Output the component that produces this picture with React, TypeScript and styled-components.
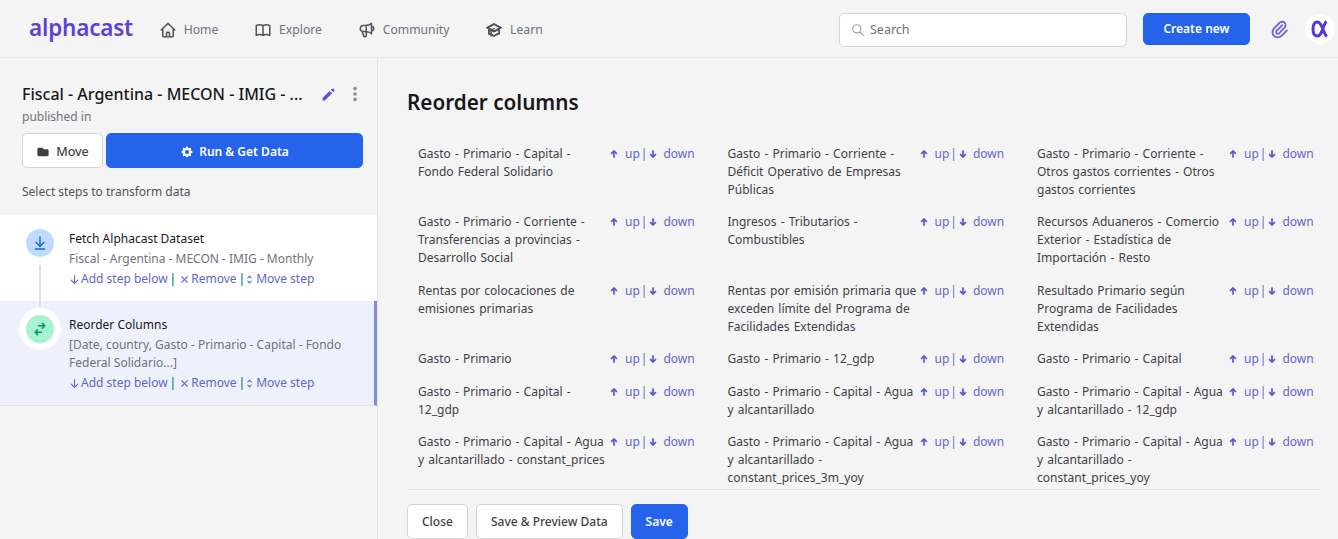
import { ReactNode } from "react";
import styled, { createGlobalStyle } from "styled-components";
import { ArrowDownToLine } from "lucide-react";
import {
  HiArrowDown,
  HiArrowSmDown,
  HiArrowSmUp,
  HiCog,
  HiDotsVertical,
  HiFolder,
  HiOutlineAcademicCap,
  HiOutlineBookOpen,
  HiOutlineHome,
  HiOutlinePaperClip,
  HiOutlineSearch,
  HiOutlineSpeakerphone,
  HiPencil,
  HiSelector,
  HiSwitchHorizontal,
  HiX
} from "react-icons/hi";

const GlobalStyle = createGlobalStyle`
  html, body { margin: 0; padding: 0; height: 100%; overflow: hidden; }
  body {
    background: #f4f4f5;
    font-family: "Noto Sans", "Open Sans", sans-serif;
    color: #3f3f46;
  }
`;

const Page = styled.div`
  display: flex;
  flex-direction: column;
  height: 539px;
  overflow: hidden;
`;

const Header = styled.header`
  display: flex;
  align-items: center;
  height: 58px;
  flex: none;
  box-sizing: border-box;
  border-bottom: 1px solid #e9e9eb;
  padding: 2px 3px 0 29px;
`;

const Logo = styled.div`
  width: 130px;
  font-size: 22.5px;
  font-weight: 600;
  letter-spacing: -0.2px;
  color: #5b44d4;
  margin-top: -5px;
`;

const Nav = styled.nav`
  display: flex;
  align-items: center;
  gap: 36px;
  flex: 1;
`;

const NavItem = styled.a`
  display: flex;
  align-items: center;
  gap: 7px;
  font-size: 12.2px;
  color: #6b7280;
  margin-left: -0.3px;
  svg { width: 18px; height: 18px; color: #52525b; }
`;

const SearchBox = styled.div`
  display: flex;
  align-items: center;
  gap: 5px;
  width: 288px;
  height: 34px;
  box-sizing: border-box;
  padding: 0 11px;
  background: #fff;
  border: 1px solid #d4d4d8;
  border-radius: 5px;
  font-size: 12.5px;
  color: #71717a;
  svg { width: 14px; height: 14px; color: #9ca3af; }
`;

const Button = styled.button<{ $primary?: boolean }>`
  display: inline-flex;
  align-items: center;
  justify-content: center;
  gap: 6px;
  height: 35px;
  box-sizing: border-box;
  border-radius: 5px;
  font-family: inherit;
  font-size: 12px;
  font-weight: ${(p) => (p.$primary ? 600 : 500)};
  color: ${(p) => (p.$primary ? "#fff" : "#3f3f46")};
  background: ${(p) => (p.$primary ? "#2563eb" : "#fff")};
  border: 1px solid ${(p) => (p.$primary ? "#2563eb" : "#d4d4d8")};
  padding: 0 14px;
  svg { width: 14px; height: 14px; }
`;

const CreateButton = styled(Button)`
  width: 107px;
  height: 32px;
  margin-left: 16px;
  margin-top: -2px;
`;

const Clip = styled(HiOutlinePaperClip)`
  width: 21px;
  height: 21px;
  color: #6d5fd8;
  margin-left: 19px;
`;

const Avatar = styled.div`
  display: flex;
  align-items: center;
  justify-content: center;
  width: 30px;
  height: 30px;
  margin-left: 15px;
  margin-top: -2px;
  border-radius: 50%;
  background: #fff;
  color: #5b35d5;
  svg { width: 18px; height: 18px; }
`;

const Body = styled.div`
  display: flex;
  flex: 1;
  min-height: 0;
`;

const Sidebar = styled.aside`
  width: 378px;
  flex: none;
  box-sizing: border-box;
  border-right: 1px solid #e4e4e7;
`;

const SideHead = styled.div`
  padding: 25px 14px 0 22px;
`;

const TitleRow = styled.div`
  display: flex;
  align-items: center;
  height: 22px;
`;

const DatasetTitle = styled.h2`
  flex: 1;
  margin: 0;
  font-size: 16px;
  font-weight: 500;
  color: #18181b;
  white-space: nowrap;
`;

const EditIcon = styled(HiPencil)`
  width: 17px;
  height: 17px;
  color: #5b50d6;
  margin-right: 9px;
`;

const MoreIcon = styled(HiDotsVertical)`
  width: 18px;
  height: 18px;
  color: #8b8b93;
  margin-right: -1px;
`;

const Published = styled.div`
  font-size: 12px;
  line-height: 18px;
  margin-top: 3px;
  color: #71717a;
`;

const ButtonRow = styled.div`
  display: flex;
  gap: 3px;
  margin-top: 7px;
`;

const MoveButton = styled(Button)`
  width: 81px;
  flex: none;
  padding: 2px 0 0;
  font-size: 12.5px;
`;

const RunButton = styled(Button)`
  flex: 1;
  gap: 5px;
  padding-top: 2px;
`;

const Hint = styled.p`
  margin: 15px 0 14px;
  font-size: 12px;
  line-height: 18px;
  letter-spacing: -0.02px;
  color: #52525b;
`;

const Step = styled.div<{ $active?: boolean }>`
  position: relative;
  display: flex;
  flex-direction: column;
  gap: 2px;
  padding: 15px 0 13px 69px;
  background: ${(p) => (p.$active ? "#eef1fb" : "#fff")};
  border-right: ${(p) => (p.$active ? "3px solid #818cdf" : "none")};
  border-bottom: ${(p) => (p.$active ? "1px solid #e4e4e7" : "none")};
  margin-bottom: ${(p) => (p.$active ? "-1px" : "0")};
`;

const Connector = styled.div`
  position: absolute;
  left: 39px;
  top: 50px;
  width: 2px;
  height: 42px;
  background: #e0e0e4;
  z-index: 1;
`;

const StepIcon = styled.div<{ $bg: string; $fg: string; $ring?: boolean }>`
  position: absolute;
  left: 26px;
  top: 14px;
  width: 28px;
  height: 28px;
  border-radius: 50%;
  display: flex;
  align-items: center;
  justify-content: center;
  background: ${(p) => p.$bg};
  color: ${(p) => p.$fg};
  box-shadow: ${(p) => (p.$ring ? "0 0 0 7px #fff" : "none")};
  z-index: 2;
  svg { width: 16px; height: 16px; }
`;

const StepTitle = styled.div`
  font-size: 12px;
  line-height: 18px;
  color: #18181b;
`;

const StepDesc = styled.div`
  font-size: 12px;
  line-height: 18px;
  color: #71717a;
  width: 285px;
`;

const StepLinks = styled.div`
  display: flex;
  align-items: center;
  font-size: 12px;
  line-height: 18px;
  color: #6366c8;
  svg { width: 11px; height: 11px; flex: none; }
`;

const LinkText = styled.span`
  margin-left: 1px;
`;

const Pipe = styled.span`
  color: #0f8f7a;
  font-weight: 600;
  margin: 0 3px 0 2px;
`;

const MoveIcon = styled(HiSelector)`
  margin-left: -4px;
`;

const Main = styled.main`
  flex: 1;
  min-width: 0;
  display: flex;
  flex-direction: column;
  padding-left: 29px;
`;

const MainTitle = styled.h1`
  margin: 30px 0 0;
  height: 28px;
  font-size: 20.7px;
  line-height: 28px;
  font-weight: 600;
  color: #18181b;
`;

const ColumnGrid = styled.div`
  flex: 1;
  min-height: 0;
  overflow: hidden;
  display: grid;
  grid-template-columns: repeat(3, 309.5px);
  grid-auto-rows: min-content;
  row-gap: 14.5px;
  padding-top: 28.5px;
`;

const Cell = styled.div`
  display: grid;
  grid-template-columns: 191px auto;
  padding-left: 11px;
  font-size: 12px;
  line-height: 18px;
  word-spacing: 1px;
  color: #3f3f46;
`;

const Arrows = styled.div`
  display: flex;
  align-items: center;
  height: 18px;
  margin-left: -1px;
  color: #6366c8;
  word-spacing: 0;
  svg {
    width: 12px;
    height: 12px;
    color: #5b50c8;
    flex: none;
    stroke: currentColor;
    stroke-width: 1px;
  }
`;

const ArrowLabel = styled.span<{ $gap: number }>`
  margin-left: ${(p) => p.$gap}px;
`;

const ArrowPipe = styled.span`
  margin-left: 1px;
`;

const Footer = styled.div`
  display: flex;
  gap: 8px;
  flex: none;
  margin-right: 18px;
  padding-top: 14px;
  height: 50px;
  box-sizing: border-box;
  border-top: 1px solid #e4e4e7;
`;

const navItems: { label: string; icon: ReactNode }[] = [
  { label: "Home", icon: <HiOutlineHome /> },
  { label: "Explore", icon: <HiOutlineBookOpen /> },
  { label: "Community", icon: <HiOutlineSpeakerphone /> },
  { label: "Learn", icon: <HiOutlineAcademicCap /> }
];

const columns = [
  "Gasto - Primario - Capital - Fondo Federal Solidario",
  "Gasto - Primario - Corriente - Déficit Operativo de Empresas Públicas",
  "Gasto - Primario - Corriente - Otros gastos corrientes - Otros gastos corrientes",
  "Gasto - Primario - Corriente - Transferencias a provincias - Desarrollo Social",
  "Ingresos - Tributarios - Combustibles",
  "Recursos Aduaneros - Comercio Exterior - Estadística de Importación - Resto",
  "Rentas por colocaciones de emisiones primarias",
  "Rentas por emisión primaria que exceden límite del Programa de Facilidades Extendidas",
  "Resultado Primario según Programa de Facilidades Extendidas",
  "Gasto - Primario",
  "Gasto - Primario - 12_gdp",
  "Gasto - Primario - Capital",
  "Gasto - Primario - Capital - 12_gdp",
  "Gasto - Primario - Capital - Agua y alcantarillado",
  "Gasto - Primario - Capital - Agua y alcantarillado - 12_gdp",
  "Gasto - Primario - Capital - Agua y alcantarillado - constant_prices",
  "Gasto - Primario - Capital - Agua y alcantarillado - constant_prices_3m_yoy",
  "Gasto - Primario - Capital - Agua y alcantarillado - constant_prices_yoy"
];

function StepActions() {
  return (
    <StepLinks>
      <HiArrowDown />
      <LinkText>Add step below</LinkText>
      <Pipe>|</Pipe>
      <HiX />
      <LinkText>Remove</LinkText>
      <Pipe>|</Pipe>
      <MoveIcon />
      <LinkText>Move step</LinkText>
    </StepLinks>
  );
}

export default function App() {
  return (
    <Page>
      <GlobalStyle />
      <Header>
        <Logo>alphacast</Logo>
        <Nav>
          {navItems.map((n) => (
            <NavItem key={n.label}>
              {n.icon}
              {n.label}
            </NavItem>
          ))}
        </Nav>
        <SearchBox>
          <HiOutlineSearch />
          Search
        </SearchBox>
        <CreateButton $primary>Create new</CreateButton>
        <Clip />
        <Avatar>
          <svg viewBox="0 0 18 18" fill="none" stroke="currentColor" strokeWidth="3" role="img" aria-label="Alphacast">
            <path d="M15.5 1.5C12 4 11.5 16 6.5 16C3 16 2 13 2 9C2 5 3 2 6.5 2C11.5 2 12 14 16 16.5" />
          </svg>
        </Avatar>
      </Header>
      <Body>
        <Sidebar>
          <SideHead>
            <TitleRow>
              <DatasetTitle>Fiscal - Argentina - MECON - IMIG - ...</DatasetTitle>
              <EditIcon />
              <MoreIcon />
            </TitleRow>
            <Published>published in</Published>
            <ButtonRow>
              <MoveButton>
                <HiFolder />
                Move
              </MoveButton>
              <RunButton $primary>
                <HiCog />
                Run &amp; Get Data
              </RunButton>
            </ButtonRow>
            <Hint>Select steps to transform data</Hint>
          </SideHead>
          <Step>
            <Connector />
            <StepIcon $bg="#bfdbfe" $fg="#1d5fd1">
              <ArrowDownToLine />
            </StepIcon>
            <StepTitle>Fetch Alphacast Dataset</StepTitle>
            <StepDesc>Fiscal - Argentina - MECON - IMIG - Monthly</StepDesc>
            <StepActions />
          </Step>
          <Step $active>
            <StepIcon $bg="#a7f3d0" $fg="#059669" $ring>
              <HiSwitchHorizontal />
            </StepIcon>
            <StepTitle>Reorder Columns</StepTitle>
            <StepDesc>[Date, country, Gasto - Primario - Capital - Fondo Federal Solidario...]</StepDesc>
            <StepActions />
          </Step>
        </Sidebar>
        <Main>
          <MainTitle>Reorder columns</MainTitle>
          <ColumnGrid>
            {columns.map((c) => (
              <Cell key={c}>
                <div>{c}</div>
                <Arrows>
                  <HiArrowSmUp />
                  <ArrowLabel $gap={5}>up</ArrowLabel>
                  <ArrowPipe>|</ArrowPipe>
                  <HiArrowSmDown />
                  <ArrowLabel $gap={4}>down</ArrowLabel>
                </Arrows>
              </Cell>
            ))}
          </ColumnGrid>
          <Footer>
            <Button>Close</Button>
            <Button>Save &amp; Preview Data</Button>
            <Button $primary>Save</Button>
          </Footer>
        </Main>
      </Body>
    </Page>
  );
}
